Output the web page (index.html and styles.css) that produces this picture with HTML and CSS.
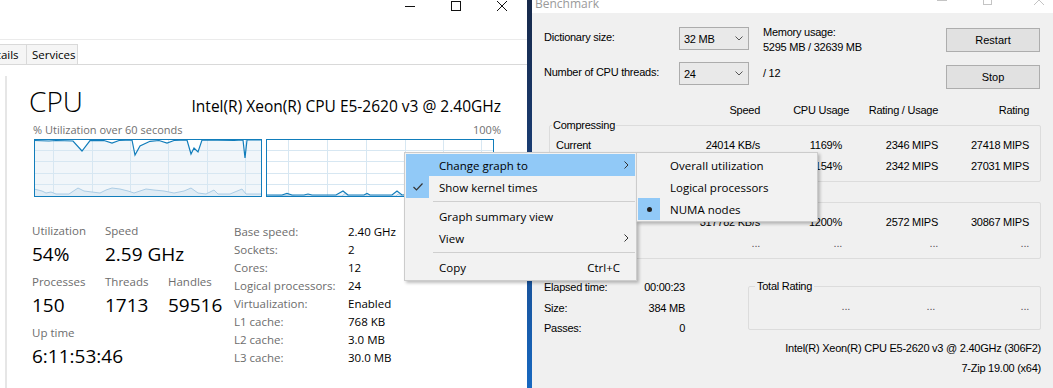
FILE: index.html
```html
<!DOCTYPE html>
<html lang="en">
<head>
    <meta charset="UTF-8">
    <title>Task Manager - Benchmark</title>
    <link rel="stylesheet" href="styles.css">
</head>
<body>
<div class="desktop">

    <!-- task manager, CPU page -->
    <section class="taskmgr">
        <div class="tm-titlebar">
            <svg class="tm-ctrl" width="10" height="10"><path d="M0 5.5H10"/></svg>
            <svg class="tm-ctrl" width="10" height="10"><rect x="0.5" y="0.5" width="9" height="9"/></svg>
            <svg class="tm-ctrl" width="10" height="10"><path d="M0 0L10 10M10 0L0 10"/></svg>
        </div>
        <div class="tm-tabs">
            <div class="tab tab-details">Details</div>
            <div class="tab tab-services">Services</div>
        </div>
        <div class="tm-body">
            <div class="tm-side"></div>
            <div class="tm-main">
                <div class="cpu-head">
                    <span class="cpu-title">CPU</span>
                    <span class="cpu-name">Intel(R) Xeon(R) CPU E5-2620 v3 @ 2.40GHz</span>
                </div>
                <div class="graph-caption">
                    <span>% Utilization over 60 seconds</span>
                    <span>100%</span>
                </div>
                <div class="graphs">
                    <svg class="graph" width="228" height="58" viewBox="0 0 228 58">
                        <polygon class="g-fill" points="0,1.5 15,2 22,1.5 39,2 48,12 56,1.7 70,1.5 78,4 85,1.5 98,1 101,16 106,7 116,2.3 125,1.5 133,4 140,1.5 153,1 157,15 160,9 164,13 168,1 200,1.5 209,1 211,19 213,1 228,1 228,58 0,58"/>
                        <path class="g-grid" d="M19.5 0V58M58.5 0V58M96.5 0V58M134.5 0V58M173.5 0V58M211.5 0V58M0 11.5H228M0 22.5H228M0 34.5H228M0 45.5H228"/>
                        <polygon class="g-kernel" points="0,50 8,52 12,54 17,53 22,55 35,55 44,49 50,52 58,53 66,54 72,51 78,49 86,50 94,52 100,54 106,52 112,50 120,51 130,52 140,54 150,52 157,49 164,54 172,55 180,51 184,55 196,55 208,50 212,55 228,55 228,58 0,58"/>
                        <polyline class="g-line" points="0,1.5 15,2 22,1.5 39,2 48,12 56,1.7 70,1.5 78,4 85,1.5 98,1 101,16 106,7 116,2.3 125,1.5 133,4 140,1.5 153,1 157,15 160,9 164,13 168,1 200,1.5 209,1 211,19 213,1 228,1"/>
                        <rect class="g-frame" x="0.5" y="0.5" width="227" height="57"/>
                    </svg>
                    <svg class="graph" width="228" height="58" viewBox="0 0 228 58">
                        <polygon class="g-fill" points="0,56 16,56 21,54.5 26,56 38,56 42,55 46,56 70,56 77,52 82,56 98,56 101,54.5 104,56 126,56 131,52 136,56 150,55 170,56 190,55 228,56 228,58 0,58"/>
                        <path class="g-grid" d="M22.5 0V58M61.5 0V58M100.5 0V58M139.5 0V58M177.5 0V58M215.5 0V58M0 11.5H228M0 22.5H228M0 34.5H228M0 45.5H228"/>
                        <polygon class="g-kernel" points="0,57 20,56.5 24,56 30,57 76,57 79,54.5 83,57 130,57 132,55 136,57 228,57 228,58 0,58"/>
                        <polyline class="g-line" points="0,56 16,56 21,54.5 26,56 38,56 42,55 46,56 70,56 77,52 82,56 98,56 101,54.5 104,56 126,56 131,52 136,56 150,55 170,56 190,55 228,56"/>
                        <rect class="g-frame" x="0.5" y="0.5" width="227" height="57"/>
                    </svg>
                </div>
                <div class="stats">
                    <div class="stats-left">
                        <div class="stat"><div class="stat-label">Utilization</div><div class="stat-value">54%</div></div>
                        <div class="stat"><div class="stat-label">Speed</div><div class="stat-value">2.59 GHz</div></div>
                        <div class="stat"></div>
                        <div class="stat"><div class="stat-label">Processes</div><div class="stat-value">150</div></div>
                        <div class="stat"><div class="stat-label">Threads</div><div class="stat-value">1713</div></div>
                        <div class="stat"><div class="stat-label">Handles</div><div class="stat-value">59516</div></div>
                        <div class="stat stat-wide"><div class="stat-label">Up time</div><div class="stat-value">6:11:53:46</div></div>
                    </div>
                    <div class="stats-right">
                        <span class="k">Base speed:</span><span class="v">2.40 GHz</span>
                        <span class="k">Sockets:</span><span class="v">2</span>
                        <span class="k">Cores:</span><span class="v">12</span>
                        <span class="k">Logical processors:</span><span class="v">24</span>
                        <span class="k">Virtualization:</span><span class="v">Enabled</span>
                        <span class="k">L1 cache:</span><span class="v">768 KB</span>
                        <span class="k">L2 cache:</span><span class="v">3.0 MB</span>
                        <span class="k">L3 cache:</span><span class="v">30.0 MB</span>
                    </div>
                </div>
            </div>
        </div>
    </section>

    <div class="wallpaper"></div>

    <!-- 7-zip benchmark -->
    <section class="bench">
        <div class="bench-title">
            <span class="bench-caption">Benchmark</span>
            <svg class="bench-ctrls" width="120" height="13">
                <path d="M5 0.5H15"/>
                <rect x="51.5" y="-5" width="8" height="9.5"/>
                <path d="M102 -5L112 5M112 -5L102 5"/>
            </svg>
        </div>
        <div class="bench-body">
            <div class="bench-row row-dict">
                <span class="field-label">Dictionary size:</span>
                <div class="combo"><span>32 MB</span><svg width="8" height="5"><polyline points="0.5,0.5 4,4 7.5,0.5"/></svg></div>
                <div class="mem">Memory usage:<br>5295 MB / 32639 MB</div>
                <button class="btn">Restart</button>
            </div>
            <div class="bench-row row-threads">
                <span class="field-label">Number of CPU threads:</span>
                <div class="combo"><span>24</span><svg width="8" height="5"><polyline points="0.5,0.5 4,4 7.5,0.5"/></svg></div>
                <span class="slash">/ 12</span>
                <button class="btn btn-stop">Stop</button>
            </div>

            <div class="cols cols-head">
                <span></span><span>Speed</span><span>CPU Usage</span><span>Rating / Usage</span><span>Rating</span>
            </div>

            <fieldset class="group">
                <legend>Compressing</legend>
                <div class="cols cols-data">
                    <span>Current</span><span>24014 KB/s</span><span>1169%</span><span>2346 MIPS</span><span>27418 MIPS</span>
                </div>
                <div class="cols cols-data">
                    <span>Resulting</span><span>23750 KB/s</span><span>1154%</span><span>2342 MIPS</span><span>27031 MIPS</span>
                </div>
            </fieldset>

            <fieldset class="group group-dec">
                <legend>Decompressing</legend>
                <div class="cols cols-data">
                    <span>Current</span><span>317782 KB/s</span><span>1200%</span><span>2572 MIPS</span><span>30867 MIPS</span>
                </div>
                <div class="cols cols-data dots">
                    <span>Resulting</span><span>...</span><span>...</span><span>...</span><span>...</span>
                </div>
            </fieldset>

            <div class="bench-bottom">
                <div class="info">
                    <span>Elapsed time:</span><span class="num">00:00:23</span>
                    <span>Size:</span><span class="num">384 MB</span>
                    <span>Passes:</span><span class="num">0</span>
                </div>
                <fieldset class="group total">
                    <legend>Total Rating</legend>
                    <div class="cols cols-total dots">
                        <span>...</span><span>...</span><span>...</span>
                    </div>
                </fieldset>
            </div>

            <div class="cpu-line">Intel(R) Xeon(R) CPU E5-2620 v3 @ 2.40GHz (306F2)</div>
            <div class="cpu-line">7-Zip 19.00 (x64)</div>
        </div>
    </section>

    <!-- context menu over the graph -->
    <div class="ctx ctx-main">
        <div class="item hl"><span class="chk"></span><span class="txt">Change graph to</span>
            <svg class="arrow" width="5" height="8"><polyline points="0.5,0.5 4,4 0.5,7.5"/></svg></div>
        <div class="item"><span class="chk on"><svg width="10" height="8"><polyline points="0.5,4 3.5,7 9.5,0.5"/></svg></span><span class="txt">Show kernel times</span></div>
        <div class="sep"></div>
        <div class="item"><span class="chk"></span><span class="txt">Graph summary view</span></div>
        <div class="item"><span class="chk"></span><span class="txt">View</span>
            <svg class="arrow" width="5" height="8"><polyline points="0.5,0.5 4,4 0.5,7.5"/></svg></div>
        <div class="sep"></div>
        <div class="item"><span class="chk"></span><span class="txt">Copy</span><span class="key">Ctrl+C</span></div>
    </div>
    <div class="ctx ctx-sub">
        <div class="item"><span class="chk"></span><span class="txt">Overall utilization</span></div>
        <div class="item"><span class="chk"></span><span class="txt">Logical processors</span></div>
        <div class="item"><span class="chk on"><span class="bullet"></span></span><span class="txt">NUMA nodes</span></div>
    </div>

</div>
</body>
</html>
```

FILE: styles.css
```css
body {
    margin: 0;
    width: 1053px;
    height: 388px;
    overflow: hidden;
    background: #1b4f8c;
}
.desktop {
    position: relative;
    display: flex;
    height: 388px;
}

/* task manager */
.taskmgr {
    width: 527px;
    background: #fff;
    font-family: "Open Sans", sans-serif;
    color: #000;
    display: flex;
    flex-direction: column;
}
.tm-titlebar {
    height: 40px;
    border-bottom: 1px solid #ebebeb;
    display: flex;
    justify-content: flex-end;
    align-items: flex-start;
    gap: 36px;
    padding: 1px 20px 0 0;
    box-sizing: border-box;
}
.tm-ctrl {
    display: block;
    fill: none;
    stroke: #111;
    stroke-width: 1;
}
.tm-tabs {
    display: flex;
    padding-top: 4px;
    border-bottom: 1px solid #d9d9d9;
}
.tab {
    height: 20px;
    box-sizing: border-box;
    border: 1px solid #d9d9d9;
    border-bottom: none;
    border-left: none;
    background: #f5f5f5;
    font-size: 11.5px;
    line-height: 19px;
    white-space: nowrap;
    overflow: hidden;
}
.tab-details {
    margin-left: -22px;
    width: 49px;
    padding-left: 4px;
}
.tab-services {
    width: 51px;
    padding-left: 5px;
}
.tm-body {
    flex: 1;
    display: flex;
}
.tm-side {
    width: 5px;
    margin-top: 11px;
    border-right: 2px solid #e6e6e6;
}
.tm-main {
    flex: 1;
    padding: 0 26px 0 22px;
}
.cpu-head {
    margin-top: 19px;
    display: flex;
    justify-content: space-between;
    align-items: baseline;
}
.cpu-title {
    font-size: 28px;
    font-weight: 300;
    line-height: 34px;
}
.cpu-name {
    font-size: 15.5px;
    line-height: 20px;
}
.graph-caption {
    margin-top: 5px;
    padding-left: 4px;
    display: flex;
    justify-content: space-between;
    font-size: 11px;
    line-height: 14px;
    color: #707070;
}
.graphs {
    margin-top: 2px;
    padding-left: 5px;
    display: flex;
    gap: 4px;
}
.graph {
    display: block;
}
.g-fill {
    fill: #f1f6fa;
}
.g-grid {
    fill: none;
    stroke: #d7e7f2;
    stroke-width: 1;
}
.g-kernel {
    fill: #e0ecf5;
    stroke: #9cc3df;
    stroke-width: 0.8;
}
.g-line {
    fill: none;
    stroke: #117dbb;
    stroke-width: 1.2;
}
.g-frame {
    fill: none;
    stroke: #117dbb;
    stroke-width: 1;
}

.stats {
    margin-top: 24px;
    display: flex;
    align-items: flex-start;
}
.stats-left {
    display: grid;
    grid-template-columns: 73px 63px 66px;
    padding-left: 3px;
}
.stat {
    margin-bottom: 5px;
    white-space: nowrap;
}
.stat-wide {
    grid-column: span 3;
}
.stat-label {
    font-size: 11.5px;
    line-height: 20px;
    color: #6d6d6d;
}
.stat-value {
    font-size: 19px;
    line-height: 26px;
}
.stats-right {
    margin-top: 2px;
    display: grid;
    grid-template-columns: 114px auto;
    font-size: 11.5px;
    line-height: 18px;
    white-space: nowrap;
}
.stats-right .k {
    color: #6d6d6d;
}

.wallpaper {
    width: 5px;
    background: linear-gradient(#17294a, #1a3f78 45%, #1768c0);
}

/* 7-zip benchmark */
.bench {
    flex: 1;
    background: #f0f0f0;
    font-family: "Liberation Sans", Arial, sans-serif;
    font-size: 11px;
    letter-spacing: -0.25px;
    color: #000;
}
.bench-title {
    height: 13px;
    background: #fff;
    display: flex;
    overflow: hidden;
}
.bench-caption {
    margin-top: -3px;
    padding-left: 3px;
    font-family: "Open Sans", sans-serif;
    font-size: 12px;
    letter-spacing: 0;
    line-height: 14px;
    color: #9a9a9a;
}
.bench-ctrls {
    margin-left: auto;
    margin-right: 1px;
    fill: none;
    stroke: #c4c4c4;
}
.bench-body {
    padding: 14px 12px 0 12px;
}
.bench-row {
    display: flex;
    align-items: flex-start;
}
.row-dict {
    height: 25px;
}
.row-threads {
    margin-top: 10px;
    height: 26px;
}
.field-label {
    width: 135px;
    margin-top: 3px;
    line-height: 14px;
}
.combo {
    width: 70px;
    height: 23px;
    box-sizing: border-box;
    border: 1px solid #acacac;
    background: #e9e9e9;
    display: flex;
    align-items: center;
    justify-content: space-between;
    padding: 0 5px 0 4px;
}
.combo svg {
    fill: none;
    stroke: #555;
}
.mem {
    margin: -2px 0 0 14px;
    line-height: 15px;
}
.slash {
    margin: 4px 0 0 14px;
    line-height: 14px;
}
.btn {
    margin: 1px 1px 0 auto;
    width: 94px;
    height: 24px;
    padding: 0;
    border: 1px solid #adadad;
    background: #e1e1e1;
    font: inherit;
    color: #000;
}
.btn-stop {
    margin-top: 3px;
}

.cols {
    display: grid;
    white-space: nowrap;
}
.cols span {
    text-align: right;
}
.cols span:first-child {
    text-align: left;
}
.cols-head {
    margin-top: 15px;
    grid-template-columns: 116px 100px 89px 89px 91px;
    line-height: 14px;
}
.group {
    margin: 1px 0 0 5px;
    padding: 0 11px 4px 6px;
    border: 1px solid #dcdcdc;
    border-radius: 2px;
    min-width: 0;
}
.group legend {
    padding: 0 1px;
    margin-left: -4px;
    line-height: 14px;
}
.group-dec {
    margin-top: 13px;
}
.cols-data {
    grid-template-columns: 104px 100px 82px 96px 91px;
    line-height: 21px;
}
.group .cols-data:first-of-type {
    margin-top: 3px;
}
.dots span {
    color: #555;
}
.bench-bottom {
    margin-top: 18px;
    display: flex;
    align-items: flex-start;
}
.info {
    display: grid;
    grid-template-columns: 90px 51px;
    line-height: 20.5px;
}
.info .num {
    text-align: right;
}
.total {
    margin: 2px 0 0 auto;
    width: 293px;
    box-sizing: border-box;
    padding: 0 11px 12px 8px;
}
.total legend {
    padding: 0 2px;
    margin-left: -2px;
}
.cols-total {
    margin-top: 3px;
    grid-template-columns: 93px 85px 94px;
    line-height: 21px;
}
.cols-total span:first-child {
    text-align: right;
}
.cpu-line {
    text-align: right;
    line-height: 20px;
}
.bench-bottom + .cpu-line {
    margin-top: -1px;
}

/* context menu */
.ctx {
    position: absolute;
    top: 152px;
    background: #f2f2f2;
    border: 1px solid #cccccc;
    box-shadow: 2px 2px 3px rgba(0, 0, 0, 0.25);
    padding: 1px;
    font-family: "Open Sans", sans-serif;
    font-size: 11.5px;
    color: #000;
    z-index: 2;
}
.ctx-main {
    left: 404px;
    width: 229px;
    padding-bottom: 2px;
}
.ctx-sub {
    left: 636px;
    width: 178px;
    z-index: 3;
}
.item {
    display: flex;
    align-items: center;
    height: 22px;
    white-space: nowrap;
}
.item.hl {
    background: #91c9f7;
}
.chk {
    width: 23px;
    height: 22px;
    flex-shrink: 0;
    display: flex;
    align-items: center;
    justify-content: center;
}
.ctx-sub .chk {
    width: 22px;
}
.chk.on {
    background: #91c9f7;
}
.chk svg {
    fill: none;
    stroke: #333;
    stroke-width: 1.2;
}
.bullet {
    width: 5px;
    height: 5px;
    border-radius: 50%;
    background: #222;
}
.txt {
    margin-left: 10px;
    flex: 1;
}
.arrow {
    margin-right: 6px;
    fill: none;
    stroke: #333;
}
.key {
    margin-right: 15px;
}
.sep {
    height: 1px;
    margin: 3px 0 3px 27px;
    background: #cfcfcf;
}
```
